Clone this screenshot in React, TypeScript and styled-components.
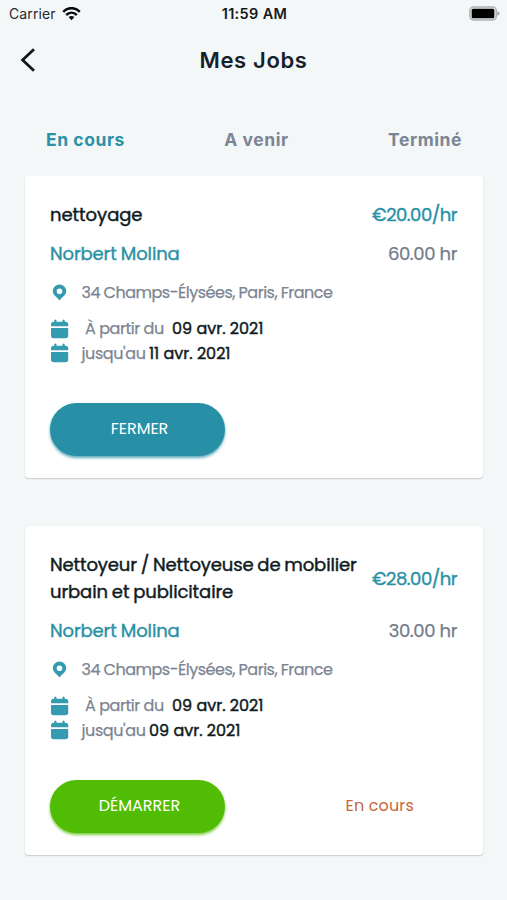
import React from "react";
import styled, { createGlobalStyle } from "styled-components";

const GlobalStyle = createGlobalStyle`
  * { box-sizing: border-box; }
  body {
    margin: 0;
    background: #f3f7f8;
    font-family: Poppins, Inter, sans-serif;
    color: #101b22;
  }
`;

const Screen = styled.main`
  width: 507px;
  height: 900px;
  overflow: hidden;
  background: #f3f7f8;
`;

const StatusBar = styled.div`
  display: grid;
  grid-template-columns: 1fr auto 1fr;
  align-items: center;
  height: 28px;
  padding: 0 7px 0 9px;
  font: 400 14px/28px Inter, sans-serif;
  color: #24292d;
`;

const Carrier = styled.div`
  display: flex;
  align-items: center;
  gap: 6px;
  letter-spacing: 0.1px;
`;

const Clock = styled.div`
  font-size: 14.5px;
  font-weight: 600;
  letter-spacing: 0.35px;
  color: #15191c;
`;

const BatterySlot = styled.div`
  display: flex;
  justify-content: flex-end;
  padding-bottom: 2px;
`;

const Header = styled.header`
  display: grid;
  grid-template-columns: 60px 1fr 60px;
  align-items: center;
  height: 64px;
`;

const BackButton = styled.button`
  display: flex;
  padding: 0 0 0 20px;
  border: 0;
  background: none;
`;

const PageTitle = styled.h1`
  margin: 0;
  text-align: center;
  font: 600 22px/30px Inter, sans-serif;
  letter-spacing: 0.65px;
  color: #15202b;
`;

const Tabs = styled.nav`
  display: flex;
  justify-content: space-between;
  align-items: center;
  height: 84px;
  padding: 12px 45px 0 46px;
`;

const Tab = styled.button<{ $active?: boolean }>`
  padding: 0;
  border: 0;
  background: none;
  font: 700 17.5px/24px Inter, sans-serif;
  letter-spacing: 0.55px;
  color: ${(p) => (p.$active ? "#2b91a6" : "#7b8594")};
`;

const JobList = styled.section`
  display: flex;
  flex-direction: column;
  gap: 48.5px;
  padding: 0 24px 0 25px;
`;

const Card = styled.article`
  padding: 26px 26px 22px 25px;
  background: #fff;
  border-radius: 4px;
  box-shadow: 0 1px 1.5px rgba(40, 50, 55, 0.22);
`;

const SplitRow = styled.div`
  display: flex;
  align-items: center;
  justify-content: space-between;
  margin-bottom: 12.6px;
  white-space: nowrap;
`;

const JobTitle = styled.h2`
  margin: 0;
  font-size: 18px;
  font-weight: 400;
  -webkit-text-stroke: 0.45px;
  word-spacing: -0.8px;
  line-height: 26.75px;
  white-space: pre-line;
`;

const Fit = styled.span<{ $tracking: number }>`
  letter-spacing: ${(p) => p.$tracking}px;
`;

const Price = styled.div`
  font-size: 18px;
  font-weight: 400;
  -webkit-text-stroke: 0.4px;
  line-height: 26px;
  color: #2b91a6;
`;

const Client = styled(Price)`
  word-spacing: -0.5px;
`;

const Hours = styled.div`
  font-size: 18px;
  -webkit-text-stroke: 0.25px;
  line-height: 26px;
  color: #737c8a;
`;

const InfoRow = styled.div<{ $gapAfter?: number }>`
  display: flex;
  align-items: center;
  height: 24.5px;
  margin-bottom: ${(p) => p.$gapAfter ?? 0}px;
  font-size: 16px;
  -webkit-text-stroke: 0.25px;
  color: #7b8492;
  white-space: pre;
`;

const Address = styled.div`
  word-spacing: -0.3px;
  letter-spacing: -0.48px;
`;

const IconSlot = styled.div`
  display: flex;
  flex: none;
  width: 31.5px;
  color: #359bb0;
`;

const Label = styled.div<{ $width: number; $indent?: number }>`
  width: ${(p) => p.$width}px;
  padding-left: ${(p) => p.$indent ?? 0}px;
`;

const DateText = styled.div`
  -webkit-text-stroke: 0.45px;
  color: #101b22;
`;

const Actions = styled.div`
  display: flex;
  align-items: center;
  justify-content: space-between;
  margin-top: 37.8px;
  padding-right: 43px;
`;

const ActionButton = styled.button<{ $color: string; $glow: string }>`
  width: 175px;
  height: 52.5px;
  padding: 0 0 1px 4px;
  border: 0;
  border-radius: 27px;
  background: ${(p) => p.$color};
  box-shadow: 0 2px 3px ${(p) => p.$glow};
  font: 400 16px/24px Poppins, Inter, sans-serif;
  color: #fff;
`;

const Status = styled.div`
  padding-bottom: 1px;
  font-size: 16px;
  line-height: 24px;
  color: #c8683c;
`;

const WifiIcon = () => (
  <svg width="19" height="14" viewBox="0 0 19 14" fill="none" stroke="#080b0d" strokeWidth="2.5">
    <path d="M1.2 4.8C6-0.1 13-0.1 17.8 4.8" />
    <path d="M4.2 8C7.3 5 11.7 5 14.8 8" />
    <path d="M6.6 10.1Q9.5 7.9 12.4 10.1L9.5 13.2Z" fill="#080b0d" stroke="none" />
  </svg>
);

const BatteryIcon = () => (
  <svg width="31" height="15" viewBox="0 0 31 15">
    <rect x="0.9" y="0.9" width="26.4" height="13.2" rx="3.8" fill="#e4e8e9" stroke="#afb3b4" strokeWidth="1.5" />
    <rect x="2.7" y="2.7" width="22.6" height="9.6" rx="1.5" fill="#000" />
    <path d="M28.4 5.2Q30.5 6 30.5 7.5T28.4 9.8Z" fill="#9a9ea0" />
  </svg>
);

const BackIcon = () => (
  <svg width="16" height="24" viewBox="0 0 16 24" fill="none" stroke="#10191f" strokeWidth="2.8">
    <path d="M14 1.2L2.6 12L14 22.8" />
  </svg>
);

const PinIcon = () => (
  <svg width="19" height="18" viewBox="0 0 19 18" fill="currentColor">
    <path fillRule="evenodd" d="M9.5 1.4A6.7 6.7 0 0 0 2.8 8.2C2.8 12 7 14 9.5 17.4C12 14 16.2 12 16.2 8.2A6.7 6.7 0 0 0 9.5 1.4ZM9.5 5.4A2.8 2.8 0 1 1 9.5 11A2.8 2.8 0 0 1 9.5 5.4Z" />
  </svg>
);

const CalendarIcon = () => (
  <svg width="19" height="20" viewBox="0 0 19 20" fill="currentColor">
    <path d="M3.6 2.7H4.3V1.2Q5.4 0 6.5 1.2V2.7H12.5V1.2Q13.6 0 14.7 1.2V2.7H15.6Q18.2 2.7 18.2 5.2V7.3H1V5.2Q1 2.7 3.6 2.7Z" />
    <path d="M1 9.1H18.2V16.5Q18.2 19.2 15.5 19.2H3.7Q1 19.2 1 16.5Z" />
  </svg>
);

interface Line {
  text: string;
  tracking: number;
}

interface Job {
  title: Line[];
  price: Line;
  hours: string;
  end: Line;
  action: Line & { color: string; glow: string };
  status?: string;
}

const jobs: Job[] = [
  {
    title: [{ text: "nettoyage", tracking: -0.05 }],
    price: { text: "€20.00/hr", tracking: -0.5 },
    hours: "60.00 hr",
    end: { text: "11 avr. 2021", tracking: 0 },
    action: { text: "FERMER", tracking: 0, color: "#278fa6", glow: "rgba(39, 143, 166, 0.75)" },
  },
  {
    title: [
      { text: "Nettoyeur / Nettoyeuse de mobilier", tracking: -0.13 },
      { text: "urbain et publicitaire", tracking: -0.1 },
    ],
    price: { text: "€28.00/hr", tracking: -0.5 },
    hours: "30.00 hr",
    end: { text: "09 avr. 2021", tracking: 0 },
    action: { text: "DÉMARRER", tracking: 0, color: "#50bc04", glow: "rgba(80, 188, 4, 0.75)" },
    status: "En cours",
  },
];

const JobCard = ({ job }: { job: Job }) => (
  <Card>
    <SplitRow>
      <JobTitle>
        {job.title.map((line, i) => (
          <Fit key={line.text} $tracking={line.tracking}>
            {i > 0 && "\n"}
            {line.text}
          </Fit>
        ))}
      </JobTitle>
      <Price>
        <Fit $tracking={job.price.tracking}>{job.price.text}</Fit>
      </Price>
    </SplitRow>
    <SplitRow>
      <Client>
        <Fit $tracking={-0.12}>Norbert Molina</Fit>
      </Client>
      <Hours>
        <Fit $tracking={-0.38}>{job.hours}</Fit>
      </Hours>
    </SplitRow>
    <InfoRow $gapAfter={12}>
      <IconSlot><PinIcon /></IconSlot>
      <Address>34 Champs-Élysées, Paris, France</Address>
    </InfoRow>
    <InfoRow>
      <IconSlot><CalendarIcon /></IconSlot>
      <Label $width={90.5} $indent={3.5}><Fit $tracking={-0.45}>À partir du</Fit></Label>
      <DateText><Fit $tracking={0}>09 avr. 2021</Fit></DateText>
    </InfoRow>
    <InfoRow>
      <IconSlot><CalendarIcon /></IconSlot>
      <Label $width={67.5}><Fit $tracking={-0.4}>jusqu'au</Fit></Label>
      <DateText><Fit $tracking={job.end.tracking}>{job.end.text}</Fit></DateText>
    </InfoRow>
    <Actions>
      <ActionButton $color={job.action.color} $glow={job.action.glow}>
        <Fit $tracking={job.action.tracking}>{job.action.text}</Fit>
      </ActionButton>
      {job.status && <Status><Fit $tracking={0.15}>{job.status}</Fit></Status>}
    </Actions>
  </Card>
);

export default function App() {
  return (
    <Screen>
      <GlobalStyle />
      <StatusBar>
        <Carrier>Carrier <WifiIcon /></Carrier>
        <Clock>11:59 AM</Clock>
        <BatterySlot><BatteryIcon /></BatterySlot>
      </StatusBar>
      <Header>
        <BackButton aria-label="Retour"><BackIcon /></BackButton>
        <PageTitle>Mes Jobs</PageTitle>
      </Header>
      <Tabs>
        <Tab $active>En cours</Tab>
        <Tab>A venir</Tab>
        <Tab>Terminé</Tab>
      </Tabs>
      <JobList>
        {jobs.map((job) => <JobCard key={job.hours} job={job} />)}
      </JobList>
    </Screen>
  );
}
